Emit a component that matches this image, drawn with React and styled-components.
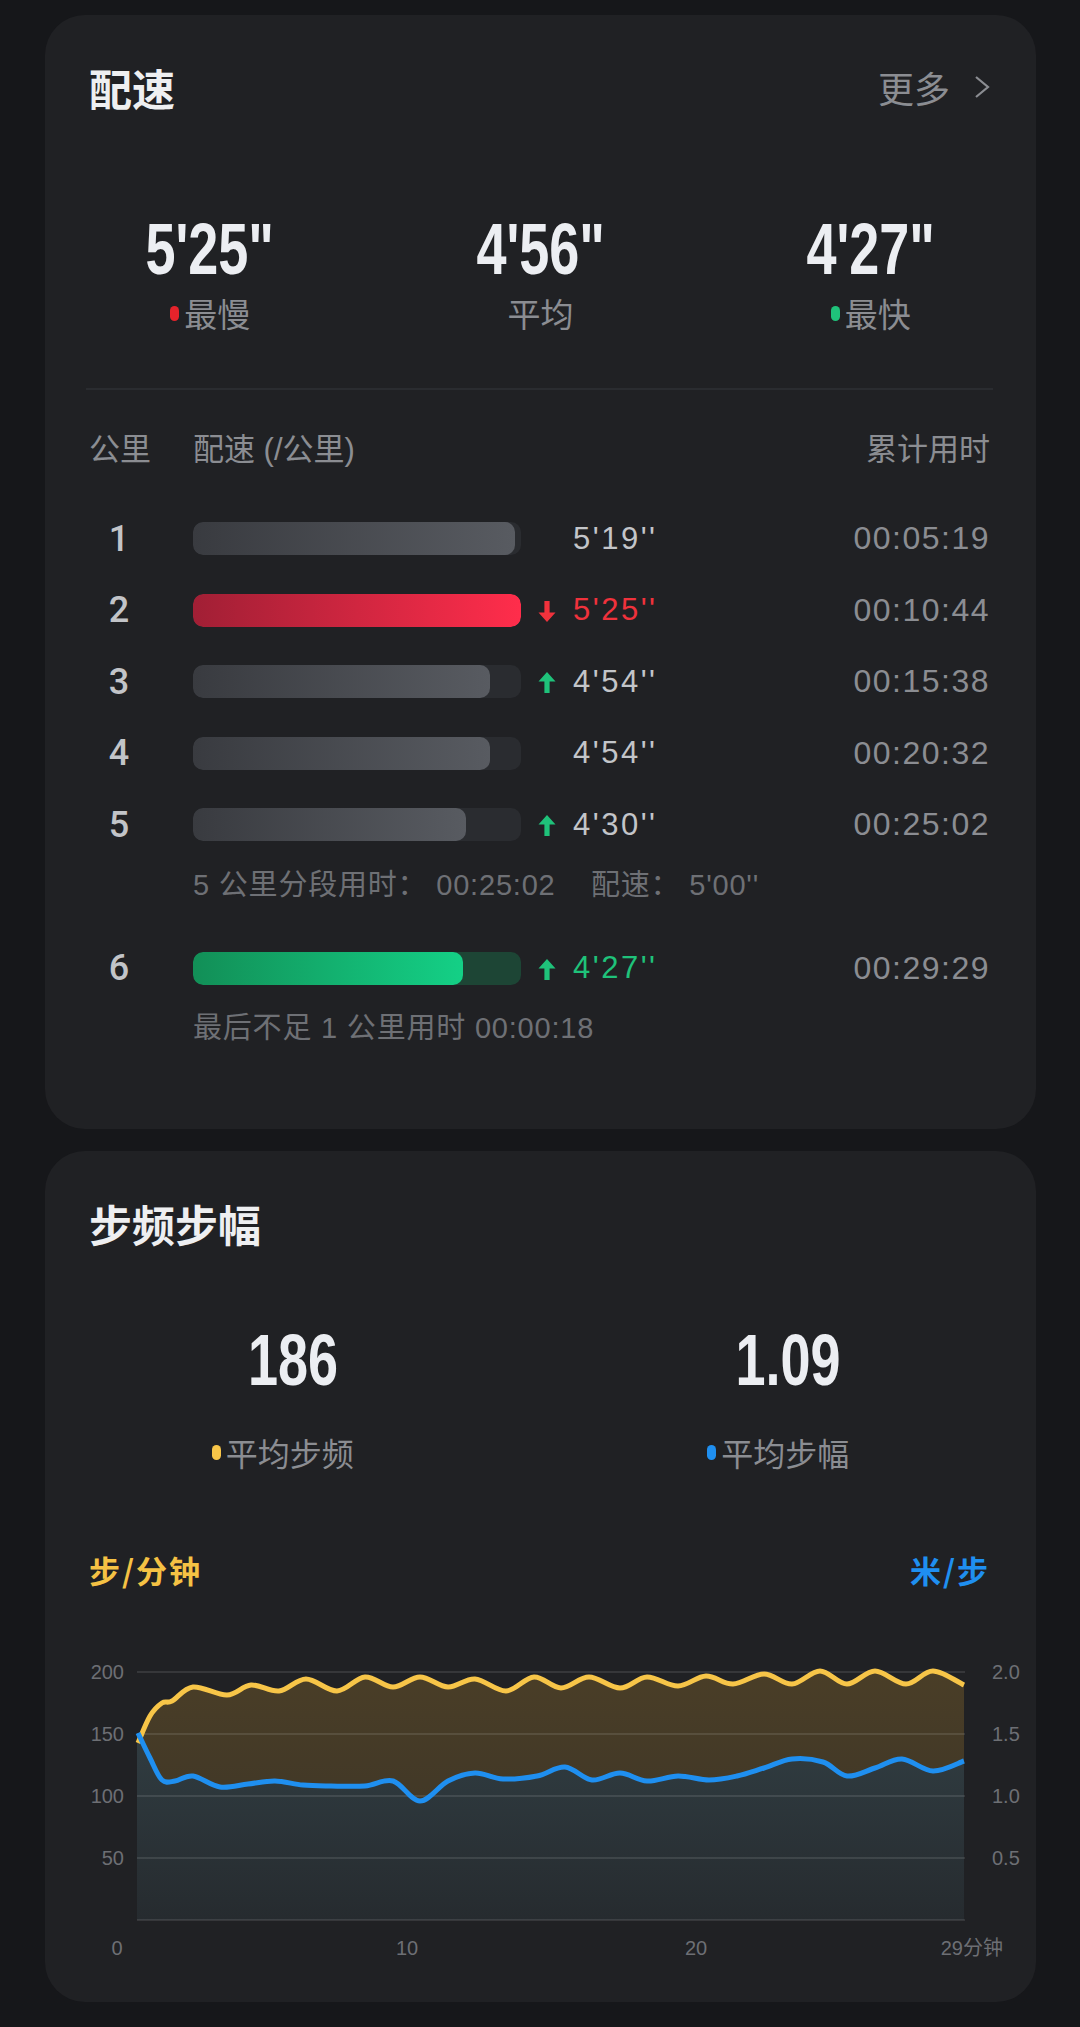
import React from 'react'
import styled, { createGlobalStyle } from 'styled-components'

const GlobalStyle = createGlobalStyle`
  body {
    margin: 0;
    background: #16171a;
    font-family: "Liberation Sans", "Noto Sans CJK SC", sans-serif;
  }
`

const tones = {
  gray: { from: '#393b40', to: '#585b61', track: '#2a2c30', text: '#c3c5c9' },
  red: { from: '#a11f35', to: '#ff2d4b', track: '#2a2c30', text: '#f0323c' },
  green: { from: '#128f57', to: '#14d086', track: '#1d4535', text: '#1fc27a' },
}

const splits = [
  { km: 1, fill: 322, pace: "5'19''", time: '00:05:19', tone: 'gray' },
  { km: 2, fill: 328, pace: "5'25''", time: '00:10:44', tone: 'red', arrow: 'down' },
  { km: 3, fill: 297, pace: "4'54''", time: '00:15:38', tone: 'gray', arrow: 'up' },
  { km: 4, fill: 297, pace: "4'54''", time: '00:20:32', tone: 'gray' },
  {
    km: 5, fill: 273, pace: "4'30''", time: '00:25:02', tone: 'gray', arrow: 'up',
    note: "5 公里分段用时： 00:25:02    配速： 5'00''", noteGap: 28,
  },
  {
    km: 6, fill: 270, pace: "4'27''", time: '00:29:29', tone: 'green', arrow: 'up',
    note: '最后不足 1 公里用时 00:00:18', noteGap: 0,
  },
]

// chart points in page pixels
const cadence = [
  [138, 1745], [150, 1718], [162, 1705], [172, 1703], [193, 1689], [227, 1697], [251, 1687],
  [279, 1693], [306, 1681], [337, 1693], [365, 1679], [393, 1689], [420, 1679],
  [448, 1689], [475, 1681], [506, 1693], [534, 1679], [561, 1690], [589, 1679],
  [620, 1690], [647, 1679], [678, 1688], [706, 1678], [733, 1686], [764, 1676],
  [792, 1686], [820, 1673], [847, 1686], [875, 1673], [906, 1686], [933, 1673], [964, 1687],
]

const stride = [
  [138, 1735], [150, 1760], [162, 1782], [175, 1783], [193, 1778], [220, 1789], [248, 1786],
  [275, 1783], [303, 1787], [331, 1788], [365, 1788], [393, 1783], [420, 1803],
  [448, 1783], [475, 1775], [503, 1781], [537, 1778], [565, 1769], [592, 1782],
  [620, 1775], [647, 1783], [678, 1778], [709, 1782], [737, 1778], [764, 1770],
  [792, 1761], [823, 1764], [847, 1778], [875, 1770], [902, 1761], [933, 1773], [964, 1763],
]

const smooth = pts => {
  let d = `M${pts[0][0]},${pts[0][1]}`
  for (let i = 0; i < pts.length - 1; i++) {
    const p0 = pts[i - 1] || pts[i]
    const p1 = pts[i]
    const p2 = pts[i + 1]
    const p3 = pts[i + 2] || p2
    const c1 = [p1[0] + (p2[0] - p0[0]) / 6, p1[1] + (p2[1] - p0[1]) / 6]
    const c2 = [p2[0] - (p3[0] - p1[0]) / 6, p2[1] - (p3[1] - p1[1]) / 6]
    d += ` C${c1[0].toFixed(1)},${c1[1].toFixed(1)} ${c2[0].toFixed(1)},${c2[1].toFixed(1)} ${p2[0]},${p2[1]}`
  }
  return d
}

const BASE = 1922
const area = pts => `${smooth(pts)} L${pts[pts.length - 1][0]},${BASE} L137,${BASE} L137,${pts[0][1]} Z`

const Page = styled.div`
  padding: 15px 44px 22px 45px;
  display: flex;
  flex-direction: column;
  gap: 22px;
`

const Card = styled.section`
  background: #202124;
  border-radius: 40px;
  padding: 42px 46px ${p => p.$bottom}px 44px;
`

const CardHeader = styled.div`
  display: flex;
  align-items: center;
  justify-content: space-between;
  height: 60px;
`

const Title = styled.h2`
  margin: 0;
  font-family: "Noto Sans CJK SC", sans-serif;
  font-size: 43px;
  font-weight: 700;
  color: #eeeff1;
`

const More = styled.div`
  display: flex;
  align-items: center;
  gap: 24px;
  font-family: "Noto Sans CJK SC", sans-serif;
  font-size: 36px;
  color: #8b8d92;
`

const Stats = styled.div`
  display: grid;
  grid-template-columns: repeat(${p => p.$cols}, 1fr);
  margin: ${p => p.$top}px -46px 0 -44px;
`

const Stat = styled.div`
  display: flex;
  flex-direction: column;
  align-items: center;
`

const BigNumber = styled.div`
  font-family: "Liberation Sans", sans-serif;
  font-weight: 700;
  font-size: 72px;
  line-height: 72px;
  color: #eceef2;
  transform: scaleX(0.75);
`

const StatLabel = styled.div`
  display: flex;
  align-items: center;
  gap: 5px;
  margin-top: ${p => p.$top}px;
  margin-right: ${p => p.$shift || 0}px;
  font-family: "Noto Sans CJK SC", sans-serif;
  font-size: ${p => p.$size}px;
  line-height: 40px;
  color: #8b8d92;
`

const Dot = styled.span`
  width: 9px;
  height: 15px;
  border-radius: 5px;
  background: ${p => p.$color};
`

const Divider = styled.div`
  height: 2px;
  margin: 55px -3px 0;
  background: #2a2c30;
`

const TableHead = styled.div`
  display: grid;
  grid-template-columns: 104px 1fr auto;
  margin-top: 40px;
  font-size: 31px;
  line-height: 40px;
  color: #8b8d92;
`

const Rows = styled.div`
  margin-top: 33px;
`

const Row = styled.div`
  display: grid;
  grid-template-columns: 104px 328px 52px 1fr auto;
  align-items: center;
  height: 71.5px;
`

const Km = styled.div`
  width: 60px;
  text-align: center;
  font-family: Roboto, sans-serif;
  font-weight: 500;
  font-size: 36px;
  color: #c2c4c8;
`

const Track = styled.div`
  height: 33px;
  border-radius: 10px;
  overflow: hidden;
  background: ${p => tones[p.$tone].track};
`

const Fill = styled.div`
  height: 100%;
  border-radius: 10px;
  background: linear-gradient(90deg, ${p => tones[p.$tone].from}, ${p => tones[p.$tone].to});
`

const ArrowCell = styled.div`
  display: flex;
  justify-content: center;
  align-items: center;
  padding-top: 2px;
`

const Pace = styled.div`
  font-size: 31px;
  letter-spacing: 2.5px;
  color: ${p => tones[p.$tone].text};
`

const Time = styled.div`
  font-size: 32px;
  letter-spacing: 1.5px;
  color: #8b8d92;
  text-align: right;
`

const Note = styled.div`
  margin: 4px 0 ${p => p.$gap}px 104px;
  font-size: 29px;
  letter-spacing: 0.8px;
  line-height: 40px;
  color: #6e7075;
  white-space: pre;
`

const Units = styled.div`
  display: flex;
  justify-content: space-between;
  margin-top: 78px;
  font-family: "Noto Sans CJK SC", sans-serif;
  font-size: 31px;
  font-weight: 700;
  line-height: 40px;
  letter-spacing: 2px;
`

const Unit = styled.span`
  color: ${p => p.$color};
`

const Chart = styled.svg`
  display: block;
  width: 991px;
  height: 325px;
  margin: 58px -46px 0 -44px;
`

const AxisText = styled.text`
  font-family: "Liberation Sans", "Noto Sans CJK SC", sans-serif;
  font-size: 20px;
  fill: #6d6f74;
`

const Arrow = ({ dir, color }) => (
  <svg width="18" height="21" viewBox="0 0 18 21">
    <path
      d={dir === 'up'
        ? 'M9 0L17.5 9.5H11.6V21H6.4V9.5H0.5Z'
        : 'M9 21L17.5 11.5H11.6V0H6.4V11.5H0.5Z'}
      fill={color}
    />
  </svg>
)

const Chevron = () => (
  <svg width="16" height="24" viewBox="0 0 16 24">
    <polyline points="2,2 14,12 2,22" fill="none" stroke="#8b8d92" strokeWidth="2.2" />
  </svg>
)

const grid = [0, 1, 2, 3, 4].map(i => 1674 + i * 62)
const leftTicks = ['200', '150', '100', '50']
const rightTicks = ['2.0', '1.5', '1.0', '0.5']

const PaceCard = () => (
  <Card $bottom={81}>
    <CardHeader>
      <Title>配速</Title>
      <More>更多<Chevron /></More>
    </CardHeader>
    <Stats $cols={3} $top={96}>
      <Stat>
        <BigNumber>5'25"</BigNumber>
        <StatLabel $top={8} $size={33}><Dot $color="#e5232b" />最慢</StatLabel>
      </Stat>
      <Stat>
        <BigNumber>4'56"</BigNumber>
        <StatLabel $top={8} $size={33}>平均</StatLabel>
      </Stat>
      <Stat>
        <BigNumber>4'27"</BigNumber>
        <StatLabel $top={8} $size={33}><Dot $color="#1fc27a" />最快</StatLabel>
      </Stat>
    </Stats>
    <Divider />
    <TableHead>
      <span>公里</span>
      <span>配速 (/公里)</span>
      <span>累计用时</span>
    </TableHead>
    <Rows>
      {splits.map(s => (
        <React.Fragment key={s.km}>
          <Row>
            <Km>{s.km}</Km>
            <Track $tone={s.tone}>
              <Fill $tone={s.tone} style={{ width: `${(s.fill / 328) * 100}%` }} />
            </Track>
            <ArrowCell>
              {s.arrow && <Arrow dir={s.arrow} color={s.arrow === 'up' ? '#1fc27a' : '#f0323c'} />}
            </ArrowCell>
            <Pace $tone={s.tone}>{s.pace}</Pace>
            <Time>{s.time}</Time>
          </Row>
          {s.note && <Note $gap={s.noteGap}>{s.note}</Note>}
        </React.Fragment>
      ))}
    </Rows>
  </Card>
)

const CadenceCard = () => (
  <Card $bottom={29}>
    <CardHeader>
      <Title>步频步幅</Title>
    </CardHeader>
    <Stats $cols={2} $top={71}>
      <Stat>
        <BigNumber>186</BigNumber>
        <StatLabel $top={36} $size={32} $shift={20}><Dot $color="#f7c548" />平均步频</StatLabel>
      </Stat>
      <Stat>
        <BigNumber>1.09</BigNumber>
        <StatLabel $top={36} $size={32} $shift={20}><Dot $color="#1f8ff0" />平均步幅</StatLabel>
      </Stat>
    </Stats>
    <Units>
      <Unit $color="#f5c244">步/分钟</Unit>
      <Unit $color="#1f8ff0">米/步</Unit>
    </Units>
    <Chart viewBox="45 1650 991 325">
      <defs>
        <linearGradient id="cadFill" x1="0" y1="1670" x2="0" y2="1922" gradientUnits="userSpaceOnUse">
          <stop offset="0" stopColor="#4a3e27" />
          <stop offset="1" stopColor="#3a3327" />
        </linearGradient>
        <linearGradient id="strFill" x1="0" y1="1740" x2="0" y2="1922" gradientUnits="userSpaceOnUse">
          <stop offset="0" stopColor="#303c41" />
          <stop offset="1" stopColor="#262b2f" />
        </linearGradient>
      </defs>
      <path d={area(cadence)} fill="url(#cadFill)" />
      <path d={area(stride)} fill="url(#strFill)" />
      {grid.map(y => (
        <line key={y} x1="137" x2="965" y1={y} y2={y} stroke="rgba(255,255,255,0.1)" strokeWidth="2" />
      ))}
      {leftTicks.map((t, i) => (
        <AxisText key={t} x="124" y={grid[i] + 7} textAnchor="end">{t}</AxisText>
      ))}
      {rightTicks.map((t, i) => (
        <AxisText key={t} x="992" y={grid[i] + 7}>{t}</AxisText>
      ))}
      <AxisText x="117" y="1957" textAnchor="middle">0</AxisText>
      <AxisText x="407" y="1957" textAnchor="middle">10</AxisText>
      <AxisText x="696" y="1957" textAnchor="middle">20</AxisText>
      <AxisText x="1003" y="1957" textAnchor="end">29分钟</AxisText>
      <path d={smooth(cadence)} fill="none" stroke="#f7c548" strokeWidth="5" strokeLinejoin="round" />
      <path d={smooth(stride)} fill="none" stroke="#1f8ff0" strokeWidth="5" strokeLinejoin="round" />
    </Chart>
  </Card>
)

const App = () => (
  <>
    <GlobalStyle />
    <Page>
      <PaceCard />
      <CadenceCard />
    </Page>
  </>
)

export default App
